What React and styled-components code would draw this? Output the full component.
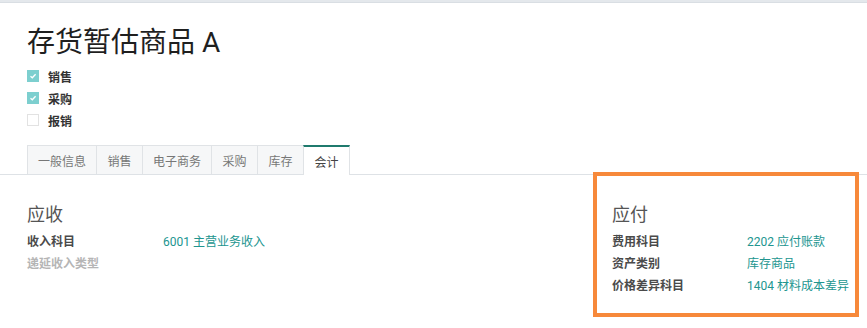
import React from "react";
import styled, { createGlobalStyle } from "styled-components";

const GlobalStyle = createGlobalStyle`
  html, body {
    margin: 0;
    padding: 0;
    background: #ffffff;
    font-family: Roboto, "Noto Sans CJK SC", sans-serif;
  }
`;

const Page = styled.div`
  position: relative;
  width: 867px;
  height: 328px;
  overflow: hidden;
  background: #ffffff;
`;

const TopStrip = styled.div`
  height: 3px;
  background: #e4e8ec;
  border-bottom: 1px solid #d9dee3;
  box-sizing: border-box;
`;

const Header = styled.div`
  padding: 24px 27px 0;
`;

const Title = styled.h1`
  margin: 0;
  font-size: 28px;
  line-height: 32px;
  font-weight: 400;
  color: #1f1f1f;
`;

const Checks = styled.div`
  margin-top: 6px;
  display: flex;
  flex-direction: column;
`;

const CheckRow = styled.label`
  display: flex;
  align-items: center;
  height: 22px;
  gap: 9px;
  font-size: 12px;
  font-weight: 700;
  color: #333;
`;

const Box = styled.span`
  width: 12px;
  height: 12px;
  box-sizing: border-box;
  display: flex;
  align-items: center;
  justify-content: center;
  background: ${(p) => (p.$on ? "#7dcfcf" : "#fff")};
  border: 1px solid ${(p) => (p.$on ? "#7dcfcf" : "#e2e2e2")};
`;

const TabBar = styled.div`
  margin-top: 14px;
  display: flex;
  padding-left: 27px;
  border-bottom: 1px solid #dee2e6;
  height: 29px;
`;

const Tab = styled.div`
  box-sizing: border-box;
  min-width: ${(p) => (p.$active ? 47 : 46)}px;
  padding: 0 10px;
  display: flex;
  align-items: center;
  justify-content: center;
  font-size: 12px;
  color: ${(p) => (p.$active ? "#444" : "#777")};
  background: ${(p) => (p.$active ? "#fff" : "#f6f7f8")};
  border: 1px solid #e0e3e6;
  border-right: ${(p) => (p.$active ? "1px solid #e0e3e6" : "none")};
  border-bottom: none;
  border-top: ${(p) => (p.$active ? "2px solid #1f7a6d" : "1px solid #e0e3e6")};
  margin-bottom: ${(p) => (p.$active ? "-1px" : "0")};
  height: ${(p) => (p.$active ? "30px" : "29px")};
`;

const Sheet = styled.div`
  display: grid;
  grid-template-columns: 585px 1fr;
  padding: 27px 0 0 27px;
`;

const Group = styled.div`
  display: flex;
  flex-direction: column;
`;

const GroupTitle = styled.div`
  font-size: 18px;
  line-height: 26px;
  color: #555;
  margin-bottom: 1px;
`;

const Row = styled.div`
  display: grid;
  grid-template-columns: ${(p) => p.$label}px 1fr;
  height: 22px;
  align-items: center;
  font-size: 12px;
`;

const Label = styled.span`
  font-weight: 700;
  color: ${(p) => (p.$muted ? "#b5b5b5" : "#4a4a4a")};
`;

const Value = styled.span`
  color: #21958f;
`;

const Highlight = styled.div`
  position: absolute;
  left: 593px;
  top: 172px;
  width: 266px;
  height: 145px;
  box-sizing: border-box;
  border: 4px solid #f7893a;
  pointer-events: none;
`;

const tabs = ["一般信息", "销售", "电子商务", "采购", "库存", "会计"];

const Tick = () => (
  <svg width="8" height="8" viewBox="0 0 8 8">
    <path d="M1.5 4.2 L3.3 5.8 L6.6 2.2" stroke="#fff" strokeWidth="1.3" fill="none" />
  </svg>
);

export default function App() {
  return (
    <Page>
      <GlobalStyle />
      <TopStrip />
      <Header>
        <Title>存货暂估商品 A</Title>
        <Checks>
          <CheckRow>
            <Box $on>
              <Tick />
            </Box>
            销售
          </CheckRow>
          <CheckRow>
            <Box $on>
              <Tick />
            </Box>
            采购
          </CheckRow>
          <CheckRow>
            <Box />
            报销
          </CheckRow>
        </Checks>
      </Header>
      <TabBar>
        {tabs.map((t, i) => (
          <Tab key={t} $active={i === tabs.length - 1}>
            {t}
          </Tab>
        ))}
      </TabBar>
      <Sheet>
        <Group>
          <GroupTitle>应收</GroupTitle>
          <Row $label={136}>
            <Label>收入科目</Label>
            <Value>6001 主营业务收入</Value>
          </Row>
          <Row $label={136}>
            <Label $muted>递延收入类型</Label>
            <span />
          </Row>
        </Group>
        <Group>
          <GroupTitle>应付</GroupTitle>
          <Row $label={135}>
            <Label>费用科目</Label>
            <Value>2202 应付账款</Value>
          </Row>
          <Row $label={135}>
            <Label>资产类别</Label>
            <Value>库存商品</Value>
          </Row>
          <Row $label={135}>
            <Label>价格差异科目</Label>
            <Value>1404 材料成本差异</Value>
          </Row>
        </Group>
      </Sheet>
      <Highlight />
    </Page>
  );
}
